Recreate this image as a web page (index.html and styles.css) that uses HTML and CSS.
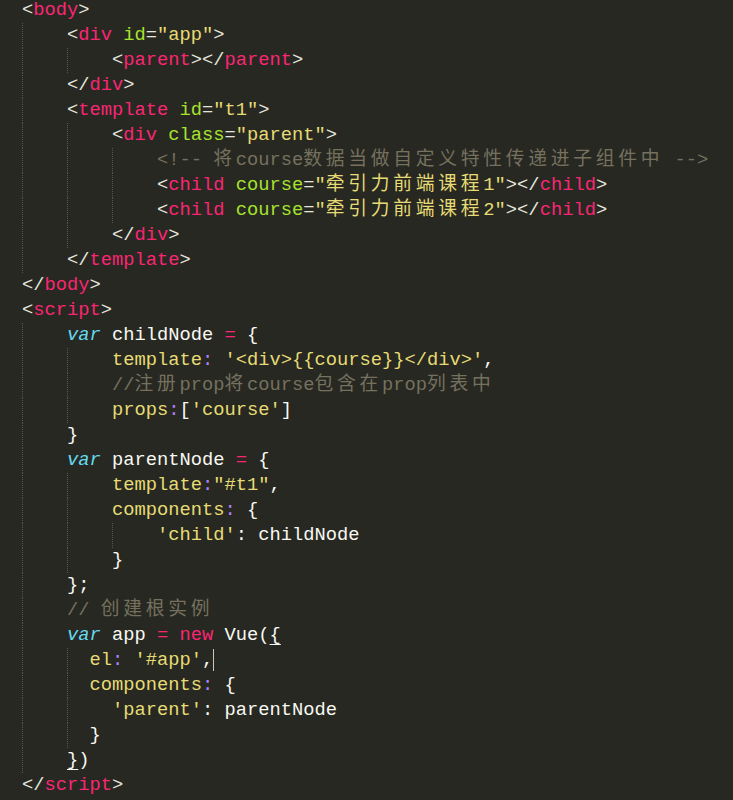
FILE: index.html
```html
<!DOCTYPE html>
<html lang="zh">
<head>
    <meta charset="UTF-8">
    <meta name="viewport" content="width=device-width, initial-scale=1.0">
    <title>Vue props</title>
    <link rel="stylesheet" href="styles.css">
</head>
<body>
    <div class="editor">
        <div class="ln"><span class="p">&lt;</span><span class="t">body</span><span class="p">&gt;</span></div>
        <div class="ln"><span class="ig"></span><span class="p">&lt;</span><span class="t">div</span> <span class="a">id</span><span class="p">=</span><span class="s">"app"</span><span class="p">&gt;</span></div>
        <div class="ln"><span class="ig"></span><span class="ig"></span><span class="p">&lt;</span><span class="t">parent</span><span class="p">&gt;&lt;/</span><span class="t">parent</span><span class="p">&gt;</span></div>
        <div class="ln"><span class="ig"></span><span class="p">&lt;/</span><span class="t">div</span><span class="p">&gt;</span></div>
        <div class="ln"><span class="ig"></span><span class="p">&lt;</span><span class="t">template</span> <span class="a">id</span><span class="p">=</span><span class="s">"t1"</span><span class="p">&gt;</span></div>
        <div class="ln"><span class="ig"></span><span class="ig"></span><span class="p">&lt;</span><span class="t">div</span> <span class="a">class</span><span class="p">=</span><span class="s">"parent"</span><span class="p">&gt;</span></div>
        <div class="ln"><span class="ig"></span><span class="ig"></span><span class="ig"></span><span class="c">&lt;!-- <span class="cjk">将</span>course<span class="cjk">数据当做自定义特性传递进子组件中</span> --&gt;</span></div>
        <div class="ln"><span class="ig"></span><span class="ig"></span><span class="ig"></span><span class="p">&lt;</span><span class="t">child</span> <span class="a">course</span><span class="p">=</span><span class="s">"<span class="cjk">牵引力前端课程</span>1"</span><span class="p">&gt;&lt;/</span><span class="t">child</span><span class="p">&gt;</span></div>
        <div class="ln"><span class="ig"></span><span class="ig"></span><span class="ig"></span><span class="p">&lt;</span><span class="t">child</span> <span class="a">course</span><span class="p">=</span><span class="s">"<span class="cjk">牵引力前端课程</span>2"</span><span class="p">&gt;&lt;/</span><span class="t">child</span><span class="p">&gt;</span></div>
        <div class="ln"><span class="ig"></span><span class="ig"></span><span class="p">&lt;/</span><span class="t">div</span><span class="p">&gt;</span></div>
        <div class="ln"><span class="ig"></span><span class="p">&lt;/</span><span class="t">template</span><span class="p">&gt;</span></div>
        <div class="ln"><span class="p">&lt;/</span><span class="t">body</span><span class="p">&gt;</span></div>
        <div class="ln"><span class="p">&lt;</span><span class="t">script</span><span class="p">&gt;</span></div>
        <div class="ln"><span class="ig"></span><span class="kw">var</span> childNode <span class="op">=</span> {</div>
        <div class="ln"><span class="ig"></span><span class="ig"></span><span class="s">template</span><span class="col">:</span> <span class="s">'&lt;div&gt;{{course}}&lt;/div&gt;'</span>,</div>
        <div class="ln"><span class="ig"></span><span class="ig"></span><span class="c">//<span class="cjk">注册</span>prop<span class="cjk">将</span>course<span class="cjk">包含在</span>prop<span class="cjk">列表中</span></span></div>
        <div class="ln"><span class="ig"></span><span class="ig"></span><span class="s">props</span><span class="col">:</span>[<span class="s">'course'</span>]</div>
        <div class="ln"><span class="ig"></span>}</div>
        <div class="ln"><span class="ig"></span><span class="kw">var</span> parentNode <span class="op">=</span> {</div>
        <div class="ln"><span class="ig"></span><span class="ig"></span><span class="s">template</span><span class="col">:</span><span class="s">"#t1"</span>,</div>
        <div class="ln"><span class="ig"></span><span class="ig"></span><span class="s">components</span><span class="col">:</span> {</div>
        <div class="ln"><span class="ig"></span><span class="ig"></span><span class="ig"></span><span class="s">'child'</span>: childNode</div>
        <div class="ln"><span class="ig"></span><span class="ig"></span>}</div>
        <div class="ln"><span class="ig"></span>};</div>
        <div class="ln"><span class="ig"></span><span class="c">// <span class="cjk">创建根实例</span></span></div>
        <div class="ln"><span class="ig"></span><span class="kw">var</span> app <span class="op">=</span> <span class="op">new</span> Vue(<span class="match">{</span></div>
        <div class="ln"><span class="ig"></span><span class="ig half"></span><span class="s">el</span><span class="col">:</span> <span class="s">'#app'</span>,<span class="caret"></span></div>
        <div class="ln"><span class="ig"></span><span class="ig half"></span><span class="s">components</span><span class="col">:</span> {</div>
        <div class="ln"><span class="ig"></span><span class="ig"></span><span class="s">'parent'</span>: parentNode</div>
        <div class="ln"><span class="ig"></span><span class="ig half"></span>}</div>
        <div class="ln"><span class="ig"></span><span class="match">}</span>)</div>
        <div class="ln"><span class="p">&lt;/</span><span class="t">script</span><span class="p">&gt;</span></div>
    </div>
</body>
</html>
```

FILE: styles.css
```css
/* Reset */
* {
    margin: 0;
    padding: 0;
    box-sizing: border-box;
}

body {
    background-color: #272822;
    color: #f8f8f2;
    overflow: hidden;
}

:root {
    --tag: #f92672;
    --attr: #a6e22e;
    --string: #e6db74;
    --comment: #75715e;
    --keyword: #66d9ef;
    --guide: #55564e;
}

.editor {
    font-family: "Liberation Mono", "Noto Sans CJK SC", monospace;
    font-size: 18.75px;
    padding-left: 22px;
    margin-top: -2px;
}

.ln {
    height: 25px;
    line-height: 25px;
    white-space: pre;
}

/* indent guides */
.ig {
    display: inline-block;
    width: 45px;
    height: 25px;
    vertical-align: top;
    border-left: 1px dotted var(--guide);
}

.ig.half {
    width: 22.5px;
}

.p { color: #e6e6de; }
.t { color: var(--tag); }
.a { color: var(--attr); }
.s { color: var(--string); }
.c { color: var(--comment); }
.op { color: var(--tag); }
.col { color: #ae81ff; }

.kw {
    color: var(--keyword);
    font-style: italic;
}

.cjk {
    font-family: "Noto Sans CJK SC", sans-serif;
    letter-spacing: 3.75px;
    line-height: 1;
}

.match {
    text-decoration: underline;
    text-underline-offset: 4px;
}

.caret {
    display: inline-block;
    width: 1px;
    height: 22px;
    margin-right: -1px;
    vertical-align: middle;
    background-color: #c8c8c0;
}
```
